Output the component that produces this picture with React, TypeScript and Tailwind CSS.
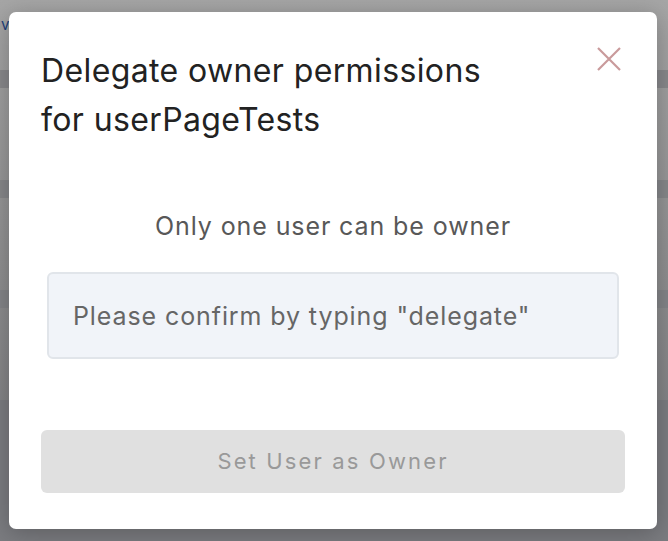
import { useState } from "react";

export default function App() {
  const [value, setValue] = useState("");

  return (
    <div className="relative h-[541px] w-full overflow-hidden bg-[#8f8f90] font-['Inter',sans-serif]">
      {/* dimmed page behind the dialog */}
      <div className="flex h-full flex-col bg-gradient-to-b from-[#a6a6a6] via-[#8f8f90] to-[#77787c]">
        <div className="h-[70px] pl-[1px] pt-[14px] text-[15px] text-[#1d3f7a]">v</div>
        <div className="h-[18px] bg-[#88888b]" />
        <div className="h-[92px]" />
        <div className="h-[18px] bg-[#86878a]" />
        <div className="h-[92px]" />
        <div className="h-[18px] bg-[#838488]" />
        <div className="h-[92px]" />
        <div className="flex-1 bg-[#7b7c80]" />
      </div>

      <div className="absolute left-[9px] top-[12px] flex h-[517px] w-[648px] flex-col rounded-[7px] bg-white shadow-[0_4px_24px_rgba(0,0,0,0.25)]">
        <div className="flex items-start justify-between pl-[32px] pr-[35px] pt-[34px]">
          <h2 className="text-[32px] font-normal leading-[49px] tracking-[0.38px] text-[#222222]">
            Delegate owner permissions
            <br />
            for userPageTests
          </h2>
          <button className="mt-0 text-[#c99a9b]" aria-label="Close">
            <svg width="26" height="26" viewBox="0 0 26 26" fill="none" stroke="currentColor" strokeWidth="2.2">
              <path d="M2 2L24 24M24 2L2 24" />
            </svg>
          </button>
        </div>

        <p className="mt-[66px] text-center text-[25px] leading-[32px] tracking-[0.9px] text-[#585858]">
          Only one user can be owner
        </p>

        <input
          value={value}
          onChange={(e) => setValue(e.target.value)}
          placeholder={'Please confirm by typing "delegate"'}
          className="mx-[38px] mt-[30px] h-[87px] rounded-[6px] border-2 border-[#e1e5ea] bg-[#f1f4f9] px-[24px] text-[25px] tracking-[0.9px] text-[#333] outline-none placeholder:text-[#666666]"
        />

        <button
          disabled
          className="mx-[32px] mt-[71px] h-[63px] rounded-[6px] bg-[#e0e0e0] text-[22px] tracking-[2.15px] text-[#999999]"
        >
          Set User as Owner
        </button>
      </div>
    </div>
  );
}
